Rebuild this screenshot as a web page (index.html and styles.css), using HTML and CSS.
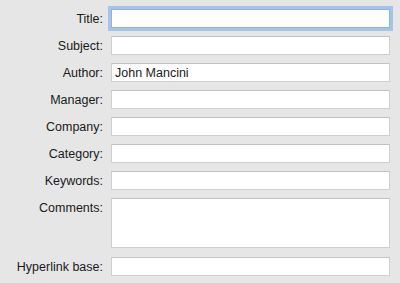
FILE: index.html
```html
<!DOCTYPE html>
<html lang="en">
  <head>
    <meta charset="UTF-8" />
    <meta name="viewport" content="width=device-width, initial-scale=1.0" />
    <title>Properties</title>
    <link rel="stylesheet" href="styles.css">
  </head>
  <body>
    <form class="props">
      <label for="title">Title:</label>
      <input type="text" id="title" class="focused" />

      <label for="subject">Subject:</label>
      <input type="text" id="subject" />

      <label for="author">Author:</label>
      <input type="text" id="author" value="John Mancini" />

      <label for="manager">Manager:</label>
      <input type="text" id="manager" />

      <label for="company">Company:</label>
      <input type="text" id="company" />

      <label for="category">Category:</label>
      <input type="text" id="category" />

      <label for="keywords">Keywords:</label>
      <input type="text" id="keywords" />

      <label for="comments" class="top">Comments:</label>
      <textarea id="comments"></textarea>

      <label for="hyperlink">Hyperlink base:</label>
      <input type="text" id="hyperlink" />
    </form>
  </body>
</html>
```

FILE: styles.css
```css
body {
  font-family: "Liberation Sans", Arial, sans-serif;
  font-size: 12.5px;
  color: #1a1a1a;
  background-color: #e6e6e6;
  margin: 0;
  height: 283px;
  overflow: hidden;
}
.props {
  display: grid;
  grid-template-columns: 103px 279px;
  column-gap: 8px;
  row-gap: 8px;
  padding: 9px 0 0 0;
}
label {
  text-align: right;
  align-self: center;
  white-space: nowrap;
}
label.top {
  align-self: start;
  padding-top: 3px;
}
input,
textarea {
  box-sizing: border-box;
  font-family: inherit;
  font-size: 12.5px;
  color: #1a1a1a;
  background: #fff;
  border: 1px solid #cfcfcf;
  border-top-color: #c2c2c2;
  border-radius: 0;
  margin: 0;
  padding: 0 3px;
  outline: none;
}
input {
  height: 19px;
}
textarea {
  height: 50px;
  resize: none;
  margin-bottom: 1px;
}
.focused {
  border-color: #8fb3e0;
  box-shadow: 0 0 0 3px #a6c4ea;
}
```
